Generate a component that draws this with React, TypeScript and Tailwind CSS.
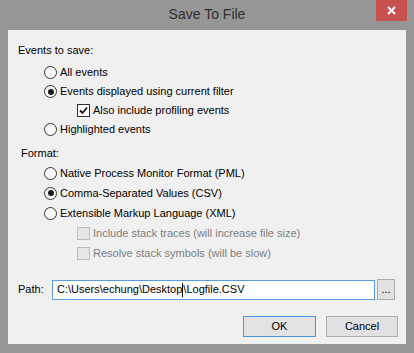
import React from 'react';

const font = { fontFamily: '"Liberation Sans", Arial, sans-serif' };

function Radio({ checked }: { checked?: boolean }) {
  return (
    <span className="w-[13px] h-[13px] rounded-full border border-[#333] bg-gradient-to-b from-[#f4f4f4] to-white flex items-center justify-center shrink-0">
      {checked && <span className="w-[6px] h-[6px] rounded-full bg-[#1a1a1a]" />}
    </span>
  );
}

function Check({ checked, disabled }: { checked?: boolean; disabled?: boolean }) {
  return (
    <span
      className={`w-[13px] h-[13px] border flex items-center justify-center shrink-0 ${
        disabled ? 'border-[#bcbcbc] bg-[#e6e6e6]' : 'border-[#333] bg-white'
      }`}
    >
      {checked && (
        <svg width="9" height="9" viewBox="0 0 9 9">
          <path d="M1 4.5 L3.5 7 L8 1.5" fill="none" stroke="#111" strokeWidth="1.8" />
        </svg>
      )}
    </span>
  );
}

function Option({ label, checked, h = 'h-[19px]' }: { label: string; checked?: boolean; h?: string }) {
  return (
    <div className={`flex items-center gap-[3px] pl-[36px] ${h}`}>
      <Radio checked={checked} />
      <span>{label}</span>
    </div>
  );
}

function CheckRow({ label, checked, disabled, h = 'h-[19px]' }: { label: string; checked?: boolean; disabled?: boolean; h?: string }) {
  return (
    <div className={`flex items-center gap-[3px] pl-[69px] ${h}`}>
      <Check checked={checked} disabled={disabled} />
      <span className={disabled ? 'text-[#7d7d7d]' : ''}>{label}</span>
    </div>
  );
}

export default function App() {
  return (
    <div className="w-[414px] h-[353px] bg-[#969696] flex flex-col text-[11px] text-black" style={font}>
      {/* Title bar */}
      <div className="h-[30px] relative flex items-center justify-center">
        <span className="text-[14px] text-[#2e2e2e] -mt-[1px]">Save To File</span>
        <div className="absolute right-[7px] top-0 w-[31px] h-[21px] bg-[#c75050] flex items-center justify-center">
          <svg width="9" height="9" viewBox="0 0 9 9">
            <path d="M1 1 L8 8 M8 1 L1 8" stroke="#fff" strokeWidth="2" />
          </svg>
        </div>
      </div>

      {/* Body */}
      <div className="mx-[8px] h-[314px] bg-[#f0f0f0] flex flex-col">
        <div className="pl-[10px] h-[19px] mt-[11px] flex items-center">Events to save:</div>
        <div className="mt-[3px]">
          <Option label="All events" />
          <Option label="Events displayed using current filter" checked />
          <CheckRow label="Also include profiling events" checked />
          <Option label="Highlighted events" />
        </div>

        <div className="pl-[13px] h-[19px] mt-[5px] flex items-center">Format:</div>
        <div>
          <Option label="Native Process Monitor Format (PML)" h="h-[20px]" />
          <Option label="Comma-Separated Values (CSV)" checked h="h-[20px]" />
          <Option label="Extensible Markup Language (XML)" h="h-[20px]" />
          <CheckRow label="Include stack traces (will increase file size)" disabled h="h-[20px]" />
          <CheckRow label="Resolve stack symbols (will be slow)" disabled h="h-[20px]" />
        </div>

        <div className="flex items-center mt-[16px] pl-[10px] h-[21px]">
          <span className="w-[34px]">Path:</span>
          <div className="w-[323px] h-[20px] border border-[#569de5] bg-white flex items-center pl-[4px]">
            <span>C:\Users\echung\Desktop</span>
            <span className="w-px h-[14px] bg-black" />
            <span>\Logfile.CSV</span>
          </div>
          <div className="ml-[2px] w-[18px] h-[21px] border border-[#adadad] bg-[#e1e1e1] flex items-end justify-center pb-[4px] leading-none">
            ...
          </div>
        </div>

        <div className="flex justify-end gap-[10px] mt-[16px] pr-[8px]">
          <button className="w-[73px] h-[21px] border border-[#4a94dd] bg-[#e3e3e3] flex items-center justify-center">OK</button>
          <button className="w-[72px] h-[21px] border border-[#adadad] bg-[#e1e1e1] flex items-center justify-center">Cancel</button>
        </div>
      </div>
    </div>
  );
}
